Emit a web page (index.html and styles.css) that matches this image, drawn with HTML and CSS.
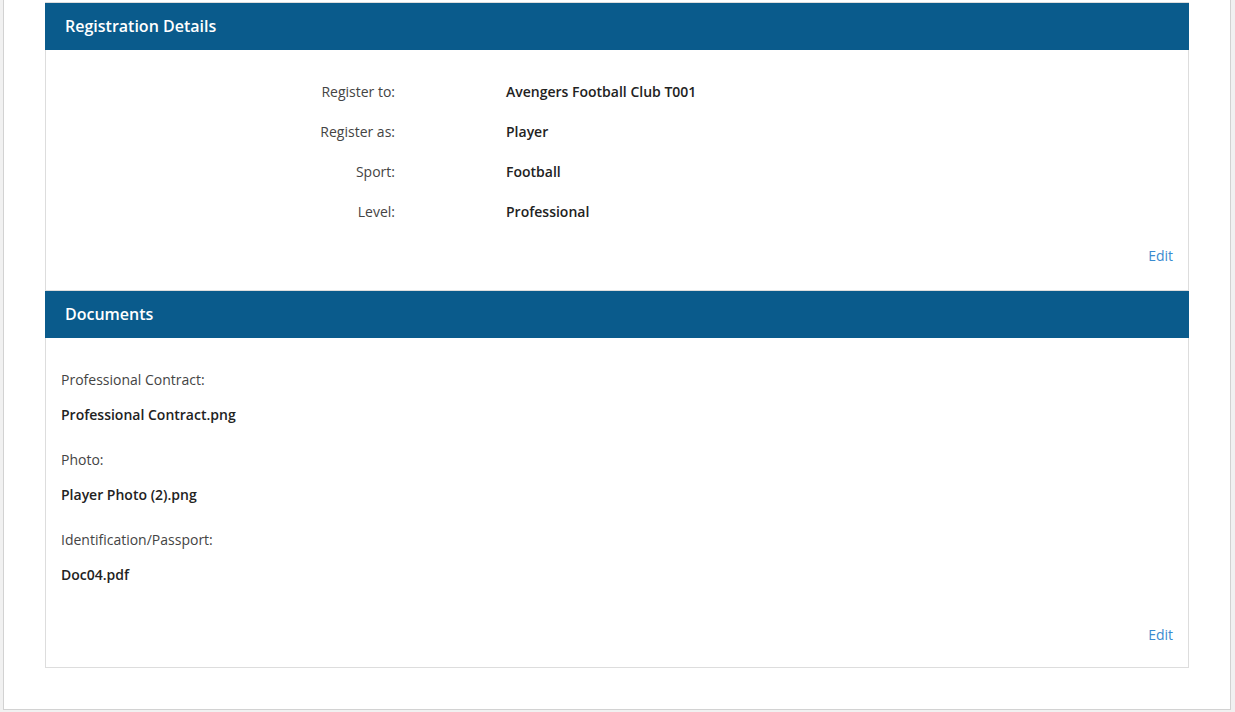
FILE: index.html
```html
<!DOCTYPE html>
<html>
	<head>
		<meta charset="utf-8" />
		<title>Registration Summary</title>
		<link rel="stylesheet" href="styles.css">
	</head>
	<body>
		<div class="page">
			<div class="panel">
				<div class="panel-heading">Registration Details</div>
				<div class="panel-body">
					<div class="detail-row">
						<div class="detail-label">Register to:</div>
						<div class="detail-value">Avengers Football Club T001</div>
					</div>
					<div class="detail-row">
						<div class="detail-label">Register as:</div>
						<div class="detail-value">Player</div>
					</div>
					<div class="detail-row">
						<div class="detail-label">Sport:</div>
						<div class="detail-value">Football</div>
					</div>
					<div class="detail-row">
						<div class="detail-label">Level:</div>
						<div class="detail-value">Professional</div>
					</div>
					<div class="panel-actions"><a href="#" class="edit-link">Edit</a></div>
				</div>
			</div>

			<div class="panel">
				<div class="panel-heading">Documents</div>
				<div class="panel-body docs">
					<div class="doc-item">
						<div class="doc-label">Professional Contract:</div>
						<div class="doc-file">Professional Contract.png</div>
					</div>
					<div class="doc-item">
						<div class="doc-label">Photo:</div>
						<div class="doc-file">Player Photo (2).png</div>
					</div>
					<div class="doc-item">
						<div class="doc-label">Identification/Passport:</div>
						<div class="doc-file">Doc04.pdf</div>
					</div>
					<div class="panel-actions"><a href="#" class="edit-link">Edit</a></div>
				</div>
			</div>
		</div>
	</body>
</html>
```

FILE: styles.css
```css
* {
	box-sizing: border-box;
}
body {
	margin: 0;
	background: #f1f1f1;
	font-family: "Open Sans", "Noto Sans", Arial, sans-serif;
	font-size: 14px;
	line-height: 20px;
	color: #333;
}
.page {
	width: 1228px;
	margin-left: 3px;
	padding: 2px 41px 41px;
	background: white;
	border: 1px solid #d2d2d2;
	border-top: none;
}
.panel {
	border: 1px solid #ddd;
	background: white;
}
.panel + .panel {
	border-top: none;
}
.panel-heading {
	margin: 0 -1px;
	padding: 13px 20px;
	background: #0a5b8c;
	color: white;
	font-size: 16px;
	font-weight: 600;
	line-height: 21px;
}
.panel-body {
	padding: 22px 15px 24px;
}
.detail-row {
	display: grid;
	grid-template-columns: 334px 1fr;
	column-gap: 111px;
	height: 40px;
	align-items: center;
}
.detail-label {
	text-align: right;
	color: #444;
}
.detail-value {
	font-weight: 600;
	color: #222;
}
.panel-actions {
	margin-top: 14px;
	text-align: right;
}
.edit-link {
	color: #3a8bd0;
	text-decoration: none;
}
.docs {
	padding-top: 32px;
	padding-bottom: 22px;
}
.doc-item + .doc-item {
	margin-top: 25px;
}
.doc-label {
	color: #444;
	margin-bottom: 15px;
}
.doc-file {
	font-weight: 600;
	color: #222;
}
.docs .panel-actions {
	margin-top: 40px;
}
```
